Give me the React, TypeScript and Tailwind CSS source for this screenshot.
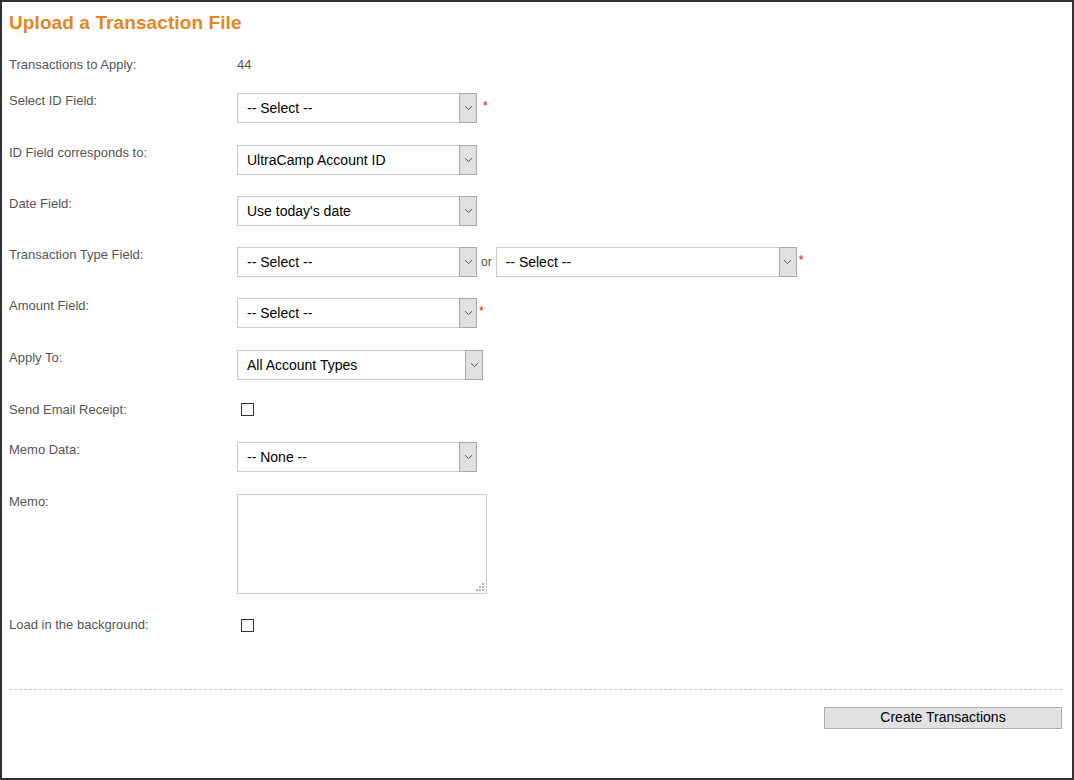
import React from "react";

const FONT = { fontFamily: '"Liberation Sans", Arial, sans-serif' };

function Chevron() {
  return (
    <svg width="9" height="6" viewBox="0 0 9 6" fill="none">
      <path d="M1 1.2 L4.5 4.6 L8 1.2" stroke="#555" strokeWidth="1" />
    </svg>
  );
}

function Select({ value, width }: { value: string; width: string }) {
  return (
    <div className={`flex h-[30px] ${width} shrink-0`}>
      <div className="flex flex-1 items-center border-y border-l border-[#cccccc] bg-white pl-[9px] text-[14px] leading-none text-black">
        {value}
      </div>
      <div className="flex w-[18px] items-center justify-center border border-[#a9a9a9] bg-[#e1e1e1]">
        <Chevron />
      </div>
    </div>
  );
}

function Star({ ml }: { ml: string }) {
  return (
    <span className={`${ml} mt-[7px] self-start text-[12px] leading-none text-[#ff0000]`}>*</span>
  );
}

function Row({
  label,
  mt,
  children,
}: {
  label: string;
  mt: string;
  children?: React.ReactNode;
}) {
  return (
    <div className={`flex items-start ${mt}`}>
      <div className="w-[228px] shrink-0 text-[13px] leading-[15px] text-[#555555]">{label}</div>
      <div className="flex items-start">{children}</div>
    </div>
  );
}

function Checkbox({ mt }: { mt: string }) {
  return <div className={`${mt} ml-[4px] h-[13px] w-[13px] border border-[#333333] bg-white`} />;
}

function Grip() {
  const dots = [
    [6, 0],
    [3, 3],
    [6, 3],
    [0, 6],
    [3, 6],
    [6, 6],
  ];
  return (
    <svg className="pointer-events-none absolute bottom-[3px] right-[3px]" width="8" height="8" viewBox="0 0 8 8">
      {dots.map(([x, y], i) => (
        <rect key={i} x={x} y={y} width="2" height="2" fill="#b0b0b0" />
      ))}
    </svg>
  );
}

export default function App() {
  return (
    <div
      style={FONT}
      className="box-border flex h-[780px] w-[1074px] flex-col border-2 border-[#333333] bg-white pl-[7px] pr-[10px]"
    >
      <h1 className="mt-[10px] h-[22px] text-[19px] font-bold leading-[22px] tracking-[0.1px] text-[#e5861f]">
        Upload a Transaction File
      </h1>

      <Row label="Transactions to Apply:" mt="mt-[23px]">
        <span className="text-[13px] leading-[15px] text-[#555555]">44</span>
      </Row>

      <Row label="Select ID Field:" mt="mt-[21px]">
        <Select value="-- Select --" width="w-[240px]" />
        <Star ml="ml-[6px]" />
      </Row>

      <Row label="ID Field corresponds to:" mt="mt-[22px]">
        <Select value="UltraCamp Account ID" width="w-[240px]" />
      </Row>

      <Row label="Date Field:" mt="mt-[21px]">
        <Select value="Use today's date" width="w-[240px]" />
      </Row>

      <Row label="Transaction Type Field:" mt="mt-[21px]">
        <Select value="-- Select --" width="w-[240px]" />
        <span className="mx-[4px] self-center text-[12px] leading-none text-[#555555]">or</span>
        <Select value="-- Select --" width="w-[301px]" />
        <Star ml="ml-[2px]" />
      </Row>

      <Row label="Amount Field:" mt="mt-[21px]">
        <Select value="-- Select --" width="w-[240px]" />
        <Star ml="ml-[2px]" />
      </Row>

      <Row label="Apply To:" mt="mt-[22px]">
        <Select value="All Account Types" width="w-[246px]" />
      </Row>

      <Row label="Send Email Receipt:" mt="mt-[22px]">
        <div className="h-[18px]">
          <Checkbox mt="mt-[1px]" />
        </div>
      </Row>

      <Row label="Memo Data:" mt="mt-[22px]">
        <Select value="-- None --" width="w-[240px]" />
      </Row>

      <Row label="Memo:" mt="mt-[22px]">
        <div className="relative h-[100px] w-[250px]">
          <textarea className="block h-[100px] w-[250px] resize-none border border-[#cccccc] bg-white outline-none" />
          <Grip />
        </div>
      </Row>

      <Row label="Load in the background:" mt="mt-[23px]">
        <div className="h-[16px]">
          <Checkbox mt="mt-[2px]" />
        </div>
      </Row>

      <div className="mt-[56px] h-0 border-t border-dashed border-[#cccccc]" />

      <div className="mt-[17px] flex justify-end">
        <button className="h-[22px] w-[238px] border border-[#adadad] bg-[#e1e1e1] pb-[2px] text-[14px] leading-none text-black">
          Create Transactions
        </button>
      </div>
    </div>
  );
}
